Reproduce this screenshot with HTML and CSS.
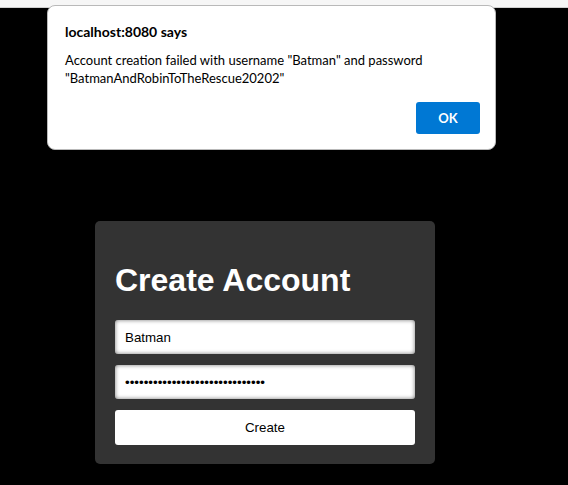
FILE: index.html
```html
<!DOCTYPE html>
<html>
<head>
<meta charset="utf-8">
<link rel="stylesheet" href="styles.css">
</head>
<body>
<div class="chrome"></div>
<main class="stage">
  <form class="card">
    <h1 class="title">Create Account</h1>
    <input class="field" type="text" value="Batman">
    <input class="field" type="password" value="BatmanAndRobinToTheRescue20202">
    <button class="create" type="button">Create</button>
  </form>
</main>
<div class="dialog">
  <div class="dialog-title">localhost:8080 says</div>
  <div class="dialog-msg">Account creation failed with username "Batman" and password "BatmanAndRobinToTheRescue20202"</div>
  <div class="dialog-actions"><button class="ok" type="button">OK</button></div>
</div>
</body>
</html>
```
FILE: styles.css
```css
html, body {
  margin: 0;
  padding: 0;
  background: #000;
  height: 100%;
  overflow: hidden;
}
body {
  font-family: "Liberation Sans", Arial, sans-serif;
}
.chrome {
  height: 7px;
  background: #f6f6f6;
  border-bottom: 1px solid #cfcfcf;
}
.stage {
  padding: 213px 0 0 95px;
}
.card {
  width: 340px;
  box-sizing: border-box;
  background: #333;
  border-radius: 5px;
  padding: 20px 20px 19px;
  display: flex;
  flex-direction: column;
}
.title {
  margin: 21px 0 21px;
  font-size: 32px;
  font-weight: bold;
  color: #fff;
  line-height: 37px;
}
.field {
  height: 34px;
  box-sizing: border-box;
  border: 0;
  border-radius: 3px;
  padding: 0 10px;
  margin: 0 0 11px;
  font-family: "Liberation Sans", Arial, sans-serif;
  font-size: 13.333px;
  color: #000;
  background: #fff;
  box-shadow: inset 0 0 4px rgba(0, 0, 0, 0.55);
  outline: none;
}
.create {
  height: 35px;
  border: 0;
  border-radius: 3px;
  background: #fff;
  color: #000;
  font-family: "Liberation Sans", Arial, sans-serif;
  font-size: 13.333px;
  padding: 0;
}
.dialog {
  position: absolute;
  left: 47px;
  top: 5px;
  width: 449px;
  box-sizing: border-box;
  background: #fff;
  border: 1px solid #b9b9b9;
  border-radius: 8px;
  padding: 16px 15px 15px 17px;
  font-family: Lato, "Noto Sans", sans-serif;
  color: #000;
}
.dialog-title {
  font-size: 14px;
  font-weight: bold;
  line-height: 20px;
}
.dialog-msg {
  margin-top: 9px;
  font-size: 13px;
  line-height: 18px;
}
.dialog-actions {
  display: flex;
  justify-content: flex-end;
  margin-top: 15px;
}
.ok {
  width: 64px;
  height: 32px;
  border: 0;
  border-radius: 3px;
  background: #0078d4;
  color: #fff;
  font-family: Lato, "Noto Sans", sans-serif;
  font-weight: bold;
  font-size: 13px;
  padding: 0;
}
```
